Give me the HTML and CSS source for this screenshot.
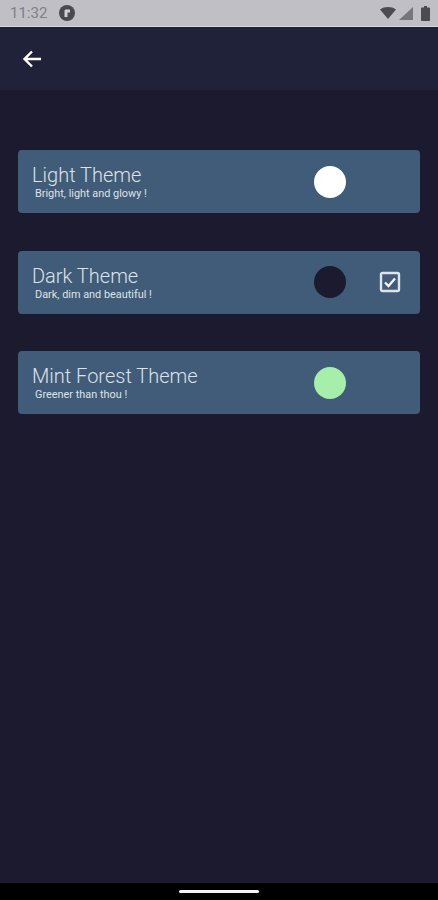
FILE: index.html
```html
<!DOCTYPE html>
<html lang="en">
<head>
    <meta charset="UTF-8">
    <meta name="viewport" content="width=device-width, initial-scale=1.0">
    <title>Themes</title>
    <link rel="stylesheet" href="styles.css">
</head>
<body>
    <div class="status">
        <div class="status-left">
            <span class="time">11:32</span>
            <svg class="status-logo" width="16" height="16" viewBox="0 0 16 16">
                <circle cx="8" cy="8" r="8" fill="#4a4a4e"/>
                <path d="M5.500 12V6C5.500 5 6.100 4.500 7 4.500H11V7.500H8.500V12Z" fill="#d0d0d3"/>
            </svg>
        </div>
        <div class="status-right">
            <svg width="16" height="12" viewBox="0 0 16 12"><path d="M0 2.500C2 .8 5 0 8 0s6 .8 8 2.500L8 12Z" fill="#4c4c50"/></svg>
            <svg class="signal" width="14" height="13" viewBox="0 0 14 13"><path d="M14 0V13H0Z" fill="#77777b"/></svg>
            <svg width="9" height="15" viewBox="0 0 9 15"><path d="M3 0H6V1.500H8C8.600 1.500 9 1.900 9 2.500V14C9 14.600 8.600 15 8 15H1C.4 15 0 14.600 0 14V2.500C0 1.900 .4 1.500 1 1.500H3Z" fill="#4c4c50"/></svg>
        </div>
    </div>
    <header class="appbar">
        <svg class="back" width="20" height="18" viewBox="0 0 20 18">
            <path d="M19 9H3M10 1.500L2.500 9L10 16.500" fill="none" stroke="#fff" stroke-width="2.400"/>
        </svg>
    </header>
    <main class="list">
        <section class="card">
            <div class="card-text">
                <h2>Light Theme</h2>
                <p>Bright, light and glowy !</p>
            </div>
            <span class="swatch swatch-light"></span>
            <span class="check-slot"></span>
        </section>
        <section class="card">
            <div class="card-text">
                <h2>Dark Theme</h2>
                <p>Dark, dim and beautiful !</p>
            </div>
            <span class="swatch swatch-dark"></span>
            <span class="check-slot">
                <svg width="22" height="22" viewBox="0 0 22 22">
                    <rect x="2" y="2" width="18" height="18" rx="1.500" fill="none" stroke="#dfe2e7" stroke-width="2.400"/>
                    <path d="M6 11.500L9.500 15L16 7.500" fill="none" stroke="#f2f3f5" stroke-width="2.400"/>
                </svg>
            </span>
        </section>
        <section class="card">
            <div class="card-text">
                <h2>Mint Forest Theme</h2>
                <p>Greener than thou !</p>
            </div>
            <span class="swatch swatch-mint"></span>
            <span class="check-slot"></span>
        </section>
    </main>
    <div class="navbar"><span class="handle"></span></div>
</body>
</html>
```

FILE: styles.css
```css
html, body {
    height: 100%;
}

body {
    margin: 0;
    padding: 0;
    font-family: Roboto, "Liberation Sans", sans-serif;
    background-color: #1c1a2e;
    display: flex;
    flex-direction: column;
    overflow: hidden;
}

.status {
    height: 26px;
    flex: none;
    background-color: #c0bfc6;
    border-bottom: 1px solid #d6d5da;
    display: flex;
    justify-content: space-between;
    align-items: center;
    padding: 0 8px 0 10px;
}
.status-left {
    display: flex;
    align-items: center;
    gap: 12px;
}
.time {
    font-size: 15px;
    color: #808085;
}
.status-right {
    display: flex;
    align-items: center;
    gap: 3px;
}
.signal {
    margin-right: 5px;
}

.appbar {
    height: 63px;
    flex: none;
    background-color: #20223a;
    display: flex;
    align-items: center;
    padding-left: 22px;
}

.list {
    flex: 1;
    padding: 60px 18px 0;
    display: flex;
    flex-direction: column;
    gap: 37.500px;
}

.card {
    height: 63px;
    background-color: #405c78;
    border-radius: 4px;
    display: flex;
    align-items: center;
    padding-left: 14px;
}
.card-text {
    width: 282px;
    color: #dfe2e7;
}
.card-text h2 {
    margin: 0;
    font-size: 20px;
    font-weight: 300;
    line-height: 24px;
}
.card-text p {
    margin: 0 0 0 3px;
    font-size: 10.900px;
    line-height: 13px;
}

.swatch {
    width: 32px;
    height: 32px;
    border-radius: 50%;
    flex: none;
}
.swatch-light {
    background-color: #fff;
}
.swatch-dark {
    background-color: #1c1a2e;
}
.swatch-mint {
    background-color: #a5efaa;
}

.check-slot {
    width: 22px;
    height: 22px;
    margin-left: 33px;
    flex: none;
}

.navbar {
    height: 17px;
    flex: none;
    background-color: #000;
    display: flex;
    justify-content: center;
    padding-top: 7px;
    box-sizing: border-box;
}
.handle {
    width: 80px;
    height: 3px;
    border-radius: 2px;
    background-color: #f4f4f4;
}
```
